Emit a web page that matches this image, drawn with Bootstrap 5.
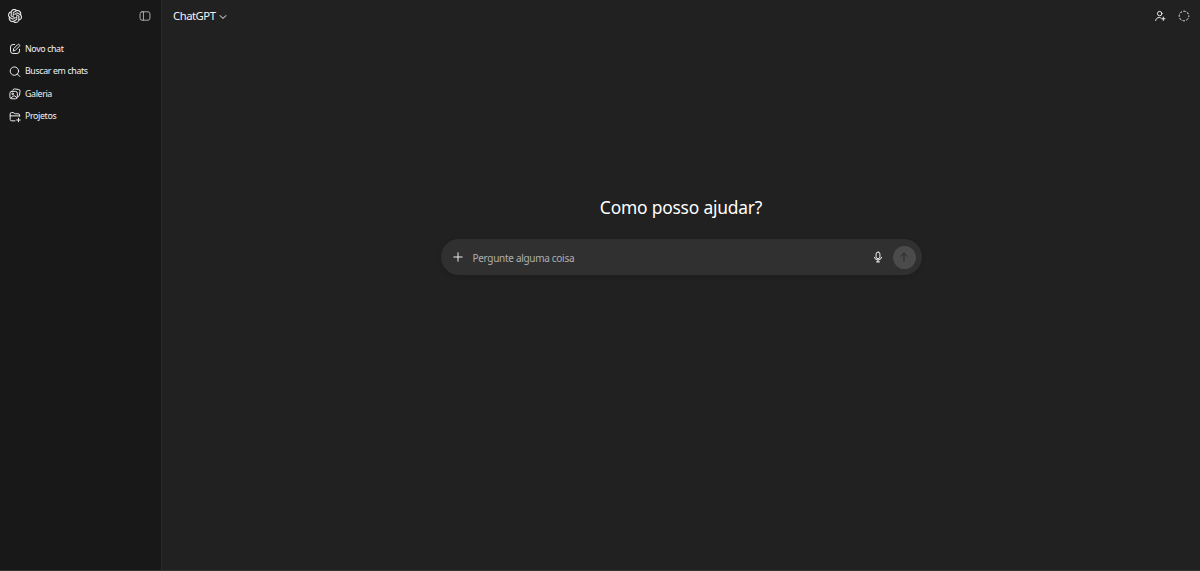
<!DOCTYPE html>
<html lang="pt-BR" data-bs-theme="dark">
  <head>
    <meta charset="UTF-8" />
    <meta name="viewport" content="width=device-width, initial-scale=1.0" />
    <title>ChatGPT</title>
    <link
      href="https://cdn.jsdelivr.net/npm/bootstrap@5.3.3/dist/css/bootstrap.min.css"
      rel="stylesheet"
    />
    <style>
      body {
        background: #212121;
        color: #f3f3f3;
        font-family: 'Noto Sans', 'Open Sans', sans-serif;
        font-size: 8.8px;
      }
      svg {
        display: block;
        flex: none;
        fill: none;
        stroke: currentColor;
        stroke-width: 1.6;
        stroke-linecap: round;
        stroke-linejoin: round;
      }
      .sidebar {
        width: 162px;
        background: #181818;
        border-right: 1px solid #292929;
      }
      .sidebar-top {
        height: 32px;
        padding: 0 10px 0 8px;
      }
      .logo {
        fill: currentColor;
        stroke: currentColor;
        stroke-width: 0.3;
      }
      .icon-muted {
        color: #afafaf;
      }
      .sidebar-menu {
        padding-top: 6px;
      }
      .sidebar-menu .nav-link {
        height: 22.6px;
        padding: 0 9px;
        gap: 4px;
        color: #f3f3f3;
        letter-spacing: -0.35px;
      }
      .topbar {
        height: 33px;
        padding: 0 10px 0 11px;
      }
      .model-button {
        gap: 3px;
        color: #f3f3f3;
        font-size: 11.3px;
        letter-spacing: -0.48px;
      }
      .topbar-actions {
        gap: 12px;
        padding-bottom: 1px;
      }
      .welcome {
        padding-top: 158px;
      }
      .welcome-title {
        height: 32px;
        margin-bottom: 16px;
        color: #fff;
        font-size: 17.4px;
        font-weight: 400;
        letter-spacing: -0.2px;
        line-height: 32px;
      }
      .prompt {
        width: 481px;
        height: 36px;
        padding: 0 6px 0 11px;
        background: #303030;
        box-shadow: 0 2px 5px #0000001c;
      }
      .prompt .form-control {
        height: 18px;
        margin: 1px 0 0 9px;
        color: #f3f3f3;
        font-size: 10px;
        letter-spacing: -0.3px;
      }
      .prompt .form-control::placeholder {
        color: #afafaf;
        opacity: 1;
      }
      .send-button {
        width: 23px;
        height: 23px;
        margin-left: 9px;
        background: #4b4b4b;
        color: #292929;
      }
      .page-edge {
        height: 1px;
        background: #353132;
      }
    </style>
  </head>
  <body>
    <div class="d-flex flex-column vh-100 overflow-hidden">
      <div class="d-flex flex-grow-1">
        <aside class="sidebar flex-shrink-0">
          <div
            class="sidebar-top d-flex align-items-center justify-content-between"
          >
            <svg class="logo" width="14" height="14" viewBox="0 0 24 24">
              <path
                d="M22.2819 9.8211a5.9847 5.9847 0 0 0-.5157-4.9108 6.0462 6.0462 0 0 0-6.5098-2.9A6.0651 6.0651 0 0 0 4.9807 4.1818a5.9847 5.9847 0 0 0-3.9977 2.9 6.0462 6.0462 0 0 0 .7427 7.0966 5.98 5.98 0 0 0 .511 4.9107 6.051 6.051 0 0 0 6.5146 2.9001A5.9847 5.9847 0 0 0 13.2599 24a6.0557 6.0557 0 0 0 5.7718-4.2058 5.9894 5.9894 0 0 0 3.9977-2.9001 6.0557 6.0557 0 0 0-.7475-7.0729zm-9.022 12.6081a4.4755 4.4755 0 0 1-2.8764-1.0408l.1419-.0804 4.7783-2.7582a.7948.7948 0 0 0 .3927-.6813v-6.7369l2.02 1.1686a.071.071 0 0 1 .038.052v5.5826a4.504 4.504 0 0 1-4.4945 4.4944zm-9.6607-4.1254a4.4708 4.4708 0 0 1-.5346-3.0137l.142.0852 4.783 2.7582a.7712.7712 0 0 0 .7806 0l5.8428-3.3685v2.3324a.0804.0804 0 0 1-.0332.0615L9.74 19.9502a4.4992 4.4992 0 0 1-6.1408-1.6464zM2.3408 7.8956a4.485 4.485 0 0 1 2.3655-1.9728V11.6a.7664.7664 0 0 0 .3879.6765l5.8144 3.3543-2.0201 1.1685a.0757.0757 0 0 1-.071 0l-4.8303-2.7865A4.504 4.504 0 0 1 2.3408 7.872zm16.5963 3.8558L13.1038 8.364 15.1192 7.2a.0757.0757 0 0 1 .071 0l4.8303 2.7913a4.4944 4.4944 0 0 1-.6765 8.1042v-5.6772a.79.79 0 0 0-.407-.667zm2.0107-3.0231l-.142-.0852-4.7735-2.7818a.7759.7759 0 0 0-.7854 0L9.409 9.2297V6.8974a.0662.0662 0 0 1 .0284-.0615l4.8303-2.7866a4.4992 4.4992 0 0 1 6.6802 4.66zM8.3065 12.863l-2.02-1.1638a.0804.0804 0 0 1-.038-.0567V6.0742a4.4992 4.4992 0 0 1 7.3757-3.4537l-.142.0805L8.704 5.459a.7948.7948 0 0 0-.3927.6813zm1.0976-2.3654l2.602-1.4998 2.6069 1.4998v2.9994l-2.5974 1.4997-2.6067-1.4997Z"
              />
            </svg>
            <svg class="icon-muted" width="12" height="12" viewBox="0 0 20 20">
              <rect x="1.8" y="3" width="16.4" height="14" rx="3.2" />
              <path d="M7.4 3v14" />
            </svg>
          </div>

          <nav class="sidebar-menu nav flex-column">
            <a href="#" class="nav-link d-flex align-items-center">
              <svg width="12" height="12" viewBox="0 0 20 20">
                <path
                  d="M9.5 2.5H6.8a4.3 4.3 0 0 0-4.3 4.3v6.4a4.3 4.3 0 0 0 4.3 4.3h6.4a4.3 4.3 0 0 0 4.3-4.3v-2.7"
                />
                <path
                  d="m7.2 12.8.6-3.4 6.6-6.6a1.9 1.9 0 0 1 2.8 2.8l-6.6 6.6z"
                />
              </svg>
              <span>Novo chat</span>
            </a>
            <a href="#" class="nav-link d-flex align-items-center">
              <svg width="12" height="12" viewBox="0 0 20 20">
                <circle cx="9" cy="8.5" r="7" />
                <path d="m14 13.5 4 4" />
              </svg>
              <span>Buscar em chats</span>
            </a>
            <a href="#" class="nav-link d-flex align-items-center">
              <svg width="12" height="12" viewBox="0 0 20 20">
                <path
                  d="M6.5 3.6A2.6 2.6 0 0 1 9.4 1.5l6.8 1a2.6 2.6 0 0 1 2.2 3l-1 6.6a2.6 2.6 0 0 1-2.4 2.2"
                />
                <rect x="1.5" y="5.6" width="12.4" height="12.4" rx="3.2" />
                <circle cx="6" cy="9.8" r="1.3" />
                <path d="m3.6 16.4 3.4-2.8c1-.8 2-.8 3 0l3 2.4" />
              </svg>
              <span>Galeria</span>
            </a>
            <a href="#" class="nav-link d-flex align-items-center">
              <svg width="12" height="12" viewBox="0 0 20 20">
                <path
                  d="M10 16.4H4.5A2.5 2.5 0 0 1 2 13.9V4.8a2.2 2.2 0 0 1 2.2-2.2h2.6c1.9 0 1.7 2 3.6 2h4.8a2.5 2.5 0 0 1 2.5 2.5v1.5M2 8.1h15.7M15.8 12v6M12.8 15h6"
                />
              </svg>
              <span>Projetos</span>
            </a>
          </nav>
        </aside>

        <main class="flex-grow-1">
          <header
            class="topbar d-flex align-items-center justify-content-between"
          >
            <button
              type="button"
              class="model-button btn p-0 border-0 d-flex align-items-center"
            >
              <span>ChatGPT</span>
              <svg class="icon-muted" width="8" height="8" viewBox="0 0 12 12">
                <path d="m1.5 4 4.5 4.2L10.5 4" />
              </svg>
            </button>
            <div class="topbar-actions d-flex align-items-center">
              <svg width="12" height="12" viewBox="0 0 20 20">
                <circle cx="9.5" cy="6" r="3.7" />
                <path
                  d="M2.8 17.6c.3-3.2 2.7-5 6-5 .8 0 1.4.1 2 .3M15.5 11.8v5.6M12.7 14.6h5.6"
                />
              </svg>
              <svg width="12" height="12" viewBox="0 0 20 20">
                <circle
                  cx="10"
                  cy="10"
                  r="8"
                  pathLength="80"
                  stroke-linecap="butt"
                  stroke-dasharray="6.4 3.6"
                  stroke-dashoffset="3.2"
                />
              </svg>
            </div>
          </header>

          <section class="welcome d-flex flex-column align-items-center">
            <h1 class="welcome-title">Como posso ajudar?</h1>
            <form class="prompt d-flex align-items-center rounded-pill">
              <svg width="12" height="12" viewBox="0 0 20 20">
                <path d="M10 3v14M3 10h14" />
              </svg>
              <input
                type="text"
                class="form-control bg-transparent border-0 shadow-none p-0"
                placeholder="Pergunte alguma coisa"
              />
              <svg width="12" height="12" viewBox="0 0 20 20">
                <rect x="6.8" y="1.8" width="6.4" height="11" rx="3.2" />
                <path d="M4 10.5a6.2 6.2 0 0 0 12 0M10 15v3.2M7.5 18.2h5" />
              </svg>
              <button
                type="button"
                class="send-button btn p-0 border-0 rounded-circle d-flex align-items-center justify-content-center flex-shrink-0"
              >
                <svg width="12" height="12" viewBox="0 0 20 20">
                  <path d="M10 17V3.5M4.5 9 10 3.5 15.5 9" />
                </svg>
              </button>
            </form>
          </section>
        </main>
      </div>
      <div class="page-edge"></div>
    </div>
    <script src="https://cdn.jsdelivr.net/npm/bootstrap@5.3.3/dist/js/bootstrap.bundle.min.js"></script>
  </body>
</html>
